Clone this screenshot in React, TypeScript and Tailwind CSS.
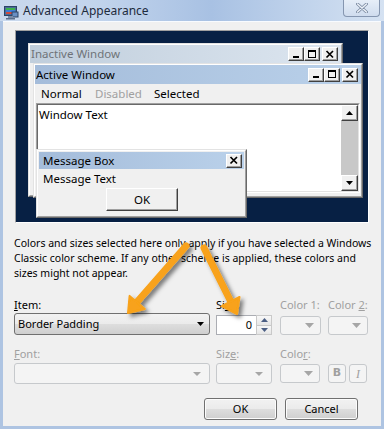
import React from 'react';

// classic 3d raised frame used by the preview windows
const Raised = ({ className = '', children }: { className?: string; children?: React.ReactNode }) => (
  <div className={`border border-t-[#e3e3e3] border-l-[#e3e3e3] border-r-[#696969] border-b-[#696969] ${className}`}>
    <div className="w-full h-full border border-t-white border-l-white border-r-[#a0a0a0] border-b-[#a0a0a0] bg-[#f0f0f0] flex flex-col">
      {children}
    </div>
  </div>
);

const CapBtn = ({ kind }: { kind: 'min' | 'max' | 'close' }) => (
  <div className="w-[16px] h-[14px] bg-[#f0f0f0] border border-t-white border-l-white border-r-[#404040] border-b-[#404040] shadow-[inset_-1px_-1px_0_#a0a0a0] flex items-center justify-center">
    <svg width="10" height="9" viewBox="0 0 10 9" shapeRendering="crispEdges">
      {kind === 'min' && <rect x="2" y="6" width="6" height="2" fill="#000" />}
      {kind === 'max' && (
        <g fill="#000">
          <rect x="1" y="0" width="8" height="2" />
          <rect x="1" y="0" width="1" height="8" />
          <rect x="8" y="0" width="1" height="8" />
          <rect x="1" y="7" width="8" height="1" />
        </g>
      )}
      {kind === 'close' && (
        <path d="M1.5 1 L8 7.5 M8 1 L1.5 7.5" stroke="#000" strokeWidth="1.7" shapeRendering="geometricPrecision" />
      )}
    </svg>
  </div>
);

const ScrollBtn = ({ up }: { up?: boolean }) => (
  <div className="w-[17px] h-[16px] bg-[#f0f0f0] border border-t-white border-l-white border-r-[#404040] border-b-[#404040] shadow-[inset_-1px_-1px_0_#a0a0a0] flex items-center justify-center">
    <svg width="7" height="4" viewBox="0 0 7 4">
      <path d={up ? 'M0 4 L3.5 0 L7 4 Z' : 'M0 0 L7 0 L3.5 4 Z'} fill="#000" />
    </svg>
  </div>
);

const DownTri = ({ color = '#000', w = 7 }: { color?: string; w?: number }) => (
  <svg width={w} height={Math.ceil(w / 2)} viewBox={`0 0 ${w} ${Math.ceil(w / 2)}`}>
    <path d={`M0 0 L${w} 0 L${w / 2} ${Math.ceil(w / 2)} Z`} fill={color} />
  </svg>
);

const DisabledCombo = ({ className = '' }: { className?: string }) => (
  <div className={`h-[21px] rounded-[3px] border border-[#c6c9cc] bg-[#f4f4f4] flex items-center justify-end pr-[8px] ${className}`}>
    <DownTri color="#a6a6a6" w={8} />
  </div>
);

const DisabledPick = ({ className = '' }: { className?: string }) => (
  <div className={`h-[19px] rounded-[3px] border border-[#c6c9cc] bg-[#f4f4f4] flex items-center justify-end pr-[6px] ${className}`}>
    <DownTri color="#a6a6a6" w={9} />
  </div>
);

const Label = ({ children, off }: { children: React.ReactNode; off?: boolean }) => (
  <div className={`h-[15px] leading-[15px] whitespace-nowrap ${off ? 'text-[#a0a0a0]' : 'text-black'}`}>{children}</div>
);

const WinButton = ({ children, className = '' }: { children: React.ReactNode; className?: string }) => (
  <div className={`h-[22px] w-[73px] rounded-[3px] border border-[#707070] bg-[linear-gradient(#f2f2f2_0%,#ebebeb_48%,#dddddd_52%,#cfcfcf_100%)] shadow-[inset_0_0_0_1px_#fcfcfc] flex items-center justify-center ${className}`}>
    {children}
  </div>
);

const TitleIcon = () => (
  <svg width="16" height="16" viewBox="0 0 16 16">
    <rect x="1.5" y="2.5" width="12" height="9" fill="#4a6c98" stroke="#2d4466" />
    <rect x="3" y="4" width="9" height="2" fill="#3fb24a" />
    <rect x="3" y="6" width="9" height="2" fill="#3a7ed8" />
    <rect x="3" y="8" width="9" height="2" fill="#d24b3c" />
    <rect x="9" y="8" width="6" height="5" fill="#6a8fc2" stroke="#2d4466" />
    <rect x="5" y="12" width="5" height="2" fill="#7a8ca8" />
    <rect x="3" y="14" width="9" height="1.5" fill="#5c6f8c" />
  </svg>
);

export default function App() {
  return (
    <div className="relative w-[384px] h-[429px] overflow-hidden bg-[#aec4e2] font-['Noto_Sans',sans-serif] text-[11px] text-black">
      {/* title bar */}
      <div className="h-[21px] flex items-center bg-[linear-gradient(90deg,#cad9ed_0%,#c2d4ec_25%,#a8c1e3_55%,#bcd0ea_75%,#d5e2f2_100%)]">
        <div className="ml-[3px] mt-[2px]">
          <TitleIcon />
        </div>
        <div className="ml-[4px] mt-[1px] text-[12px] text-[#1e2b3c]">Advanced Appearance</div>
        <div className="ml-auto mr-[4px] self-start w-[37px] h-[17px] rounded-b-[4px] border border-t-0 border-[#8596b0] bg-[linear-gradient(#e6eef8,#cfdcee)] flex items-center justify-center">
          <svg width="12" height="10" viewBox="0 0 12 10">
            <path d="M1.5 1 L10.5 9 M10.5 1 L1.5 9" stroke="#7c8ba2" strokeWidth="3" strokeLinecap="round" />
            <path d="M1.5 1 L10.5 9 M10.5 1 L1.5 9" stroke="#eef3fa" strokeWidth="1.4" strokeLinecap="round" />
          </svg>
        </div>
      </div>

      {/* dialog body */}
      <div className="mx-[3px] h-[405px] bg-[#f0f0f0] px-[11px] pt-[8px] border-t border-[#f8fbff]">
        {/* preview */}
        <div className="relative ml-[1px] w-[354px] h-[193px] border border-t-[#a0a0a0] border-l-[#a0a0a0] border-r-white border-b-white bg-[#072044] text-[11.5px]">
          {/* inactive window */}
          <Raised className="absolute left-[12px] top-[12px] w-[315px] h-[154px]">
            <div className="h-[18px] flex items-center bg-[linear-gradient(90deg,#c0cedc,#dde6f0)] pl-[1px] pr-[3px]">
              <span className="text-[#6f7378]">Inactive Window</span>
              <div className="ml-auto flex">
                <CapBtn kind="min" />
                <CapBtn kind="max" />
                <div className="w-[2px]" />
                <CapBtn kind="close" />
              </div>
            </div>
          </Raised>

          {/* active window */}
          <Raised className="absolute left-[17px] top-[32px] w-[330px] h-[135px]">
            <div className="h-[19px] flex items-center bg-[linear-gradient(90deg,#a4bcda,#bad1ea)] pl-[1px] pr-[3px]">
              <span>Active Window</span>
              <div className="ml-auto flex">
                <CapBtn kind="min" />
                <CapBtn kind="max" />
                <div className="w-[2px]" />
                <CapBtn kind="close" />
              </div>
            </div>
            <div className="h-[19px] flex items-center pl-[6px]">
              <span className="w-[54px]">Normal</span>
              <span className="w-[59px] text-[#a0a0a0]">Disabled</span>
              <span>Selected</span>
            </div>
            <div className="mx-[1px] mb-[3px] flex-1 border border-t-[#a0a0a0] border-l-[#a0a0a0] border-r-white border-b-white">
              <div className="h-full border border-t-[#696969] border-l-[#696969] border-r-[#e3e3e3] border-b-[#e3e3e3] bg-white flex">
                <div className="flex-1 pl-[1px] pt-[2px] leading-[15px]">Window Text</div>
                <div className="w-[17px] flex flex-col bg-[#c8c8c8]">
                  <ScrollBtn up />
                  <div className="flex-1" />
                  <ScrollBtn />
                </div>
              </div>
            </div>
          </Raised>

          {/* message box */}
          <Raised className="absolute left-[20px] top-[118px] w-[211px] h-[69px]">
            <div className="h-[17px] mt-[1px] mx-[1px] flex items-center bg-[linear-gradient(90deg,#a4bcda,#bad1ea)] pl-[4px] pr-[2px]">
              <span>Message Box</span>
              <div className="ml-auto">
                <CapBtn kind="close" />
              </div>
            </div>
            <div className="h-[19px] leading-[19px] pl-[5px]">Message Text</div>
            <div className="pl-[68px]">
              <div className="w-[72px] h-[23px] border border-t-white border-l-white border-r-[#404040] border-b-[#404040] shadow-[inset_-1px_-1px_0_#a0a0a0] flex items-center justify-center">
                OK
              </div>
            </div>
          </Raised>
        </div>

        {/* note */}
        <p className="mt-[13px] leading-[15px] whitespace-nowrap text-[10.5px]">
          Colors and sizes selected here only apply if you have selected a Windows
          <br />
          Classic color scheme. If any other scheme is applied, these colors and
          <br />
          sizes might not appear.
        </p>

        {/* item row */}
        <div className="mt-[16px] flex">
          <div className="w-[196px]">
            <Label>
              <span className="underline">I</span>tem:
            </Label>
            <div className="mt-[1px] h-[22px] rounded-[3px] border border-[#707070] bg-[linear-gradient(#f2f2f2_0%,#ebebeb_48%,#dddddd_52%,#cfcfcf_100%)] flex items-center pl-[3px] pr-[5px]">
              <span>Border Padding</span>
              <div className="ml-auto">
                <DownTri />
              </div>
            </div>
          </div>
          <div className="ml-[6px] w-[56px]">
            <Label>
              Si<span className="underline">z</span>e:
            </Label>
            <div className="mt-[3px] h-[20px] flex">
              <div className="flex-1 border border-[#abadb3] border-r-0 bg-white text-right pr-[4px] leading-[18px]">0</div>
              <div className="w-[16px] flex flex-col border border-[#c9c9c9] bg-[#f4f4f4]">
                <div className="flex-1 flex items-center justify-center border-b border-[#c9c9c9] bg-[linear-gradient(#f8f8f8,#e6e6e6)]">
                  <svg width="7" height="4" viewBox="0 0 7 4"><path d="M0 4 L3.5 0 L7 4 Z" fill="#4c5f84" /></svg>
                </div>
                <div className="flex-1 flex items-center justify-center bg-[linear-gradient(#f8f8f8,#e6e6e6)]">
                  <svg width="7" height="4" viewBox="0 0 7 4"><path d="M0 0 L7 0 L3.5 4 Z" fill="#4c5f84" /></svg>
                </div>
              </div>
            </div>
          </div>
          <div className="ml-[8px] w-[41px]">
            <Label off>Color 1:</Label>
            <DisabledPick className="mt-[4px]" />
          </div>
          <div className="ml-[7px] w-[40px]">
            <Label off>
              Color <span className="underline">2</span>:
            </Label>
            <DisabledPick className="mt-[4px]" />
          </div>
        </div>

        {/* font row */}
        <div className="mt-[11px] flex">
          <div className="w-[196px]">
            <Label off>
              <span className="underline">F</span>ont:
            </Label>
            <DisabledCombo className="mt-[2px]" />
          </div>
          <div className="ml-[6px] w-[56px]">
            <Label off>
              Siz<span className="underline">e</span>:
            </Label>
            <DisabledCombo className="mt-[2px]" />
          </div>
          <div className="ml-[8px] w-[40px]">
            <Label off>
              Colo<span className="underline">r</span>:
            </Label>
            <DisabledPick className="mt-[3px]" />
          </div>
          <div className="ml-[8px] mt-[18px] flex gap-[3px]">
            <div className="w-[18px] h-[19px] rounded-[3px] border border-[#c6c9cc] bg-[#f4f4f4] flex items-center justify-center text-[11px] font-bold text-[#a0a0a0] font-['DejaVu_Sans',sans-serif]">
              B
            </div>
            <div className="w-[18px] h-[19px] rounded-[3px] border border-[#c6c9cc] bg-[#f4f4f4] flex items-center justify-center text-[12px] italic text-[#a0a0a0] font-['Liberation_Serif',serif]">
              I
            </div>
          </div>
        </div>

        {/* buttons */}
        <div className="mt-[14px] flex justify-end gap-[8px] pr-[12px]">
          <WinButton>OK</WinButton>
          <WinButton>Cancel</WinButton>
        </div>
      </div>

      {/* annotation arrows */}
      <svg className="absolute left-0 top-0 pointer-events-none" width="384" height="429">
        <defs>
          <filter id="sh" x="-30%" y="-30%" width="160%" height="160%">
            <feDropShadow dx="3" dy="3" stdDeviation="2.2" floodColor="#000" floodOpacity="0.5" />
          </filter>
        </defs>
        <g filter="url(#sh)" fill="#f8a21a" stroke="#f8a21a">
          <line x1="186" y1="246" x2="137" y2="302" strokeWidth="7" strokeLinecap="round" />
          <polygon points="128,313 144.8,309 129.6,295.9" strokeWidth="2" strokeLinejoin="round" />
          <line x1="204" y1="248" x2="231" y2="302" strokeWidth="7" strokeLinecap="round" />
          <polygon points="237,314 239.5,297 221.7,306.2" strokeWidth="2" strokeLinejoin="round" />
        </g>
      </svg>
    </div>
  );
}
